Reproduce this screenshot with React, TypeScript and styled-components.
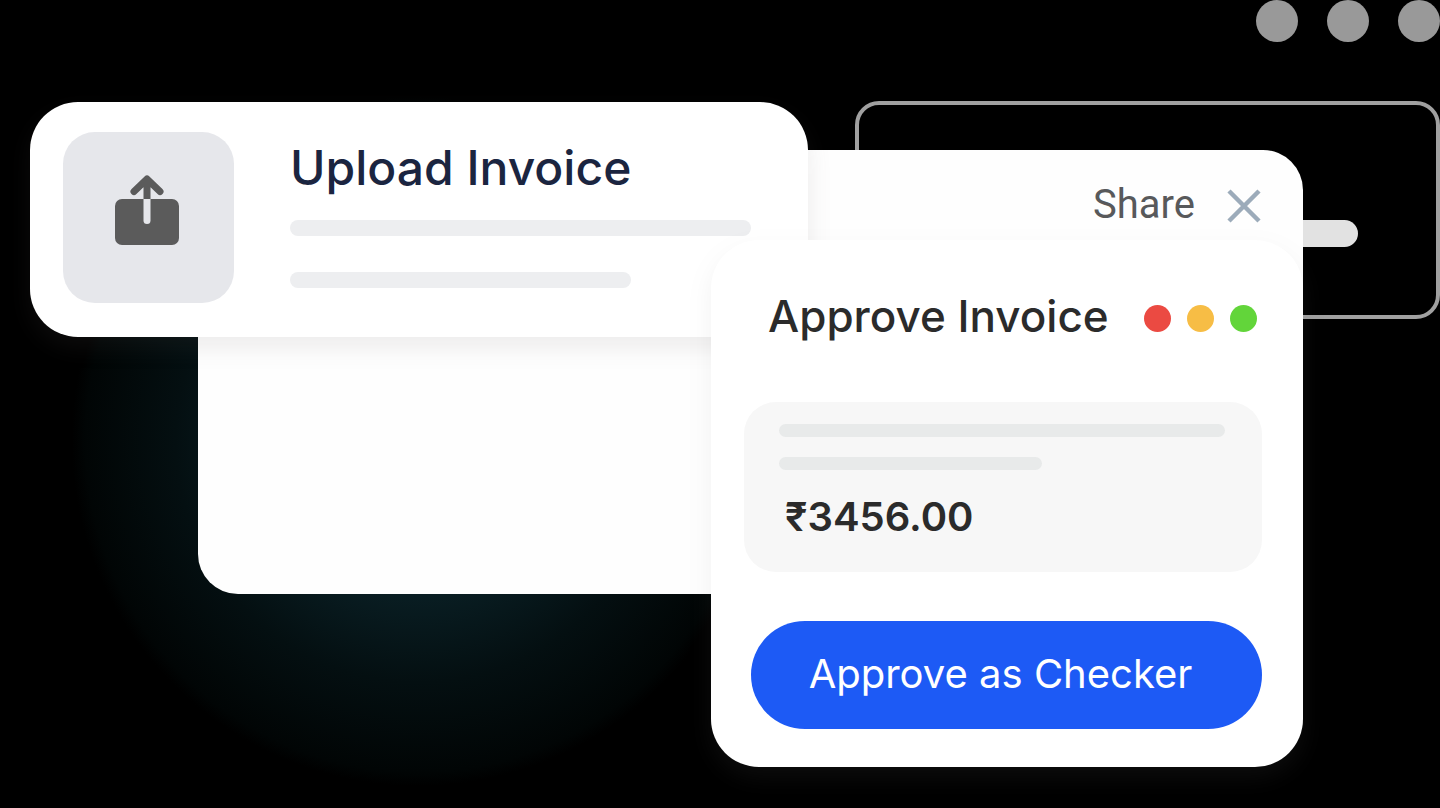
import React from "react";
import styled, { createGlobalStyle } from "styled-components";

const GlobalStyle = createGlobalStyle`
  *, *::before, *::after { box-sizing: border-box; }
  body { margin: 0; background: #000; font-family: Inter, "Liberation Sans", sans-serif; }
  h2, p { margin: 0; }
  button { border: 0; padding: 0; background: none; font: inherit; cursor: pointer; }
`;

const Stage = styled.main`
  display: grid;
  min-height: 100vh;
  grid-template-columns: 30fr 168fr 513fr 97fr 47fr 448fr 137fr;
  grid-template-rows: 101px 49px 90px 79px 18px 257px 173px 1fr;
  background: radial-gradient(
    circle 346px at 29% 440px,
    #0c2830 0%,
    #091d22 45%,
    #040f11 70%,
    #010505 96%,
    #000 100%
  );
`;

const WindowDots = styled.div`
  grid-area: 1 / 6 / 2 / 8;
  display: flex;
  justify-content: flex-end;
  gap: 29px;
`;

const Dot = styled.span<{ $size: number; $color: string }>`
  width: ${(p) => p.$size}px;
  height: ${(p) => p.$size}px;
  border-radius: 50%;
  background: ${(p) => p.$color};
`;

const OutlinePanel = styled.div`
  grid-area: 2 / 6 / 5 / 8;
  display: flex;
  justify-content: flex-end;
  align-items: flex-start;
  padding: 115px 78px 0 0;
  border: 4px solid #a0a0a0;
  border-radius: 24px;
`;

const Bar = styled.span<{ $width: string; $height: number; $color: string }>`
  display: block;
  width: ${(p) => p.$width};
  height: ${(p) => p.$height}px;
  border-radius: ${(p) => p.$height}px;
  background: ${(p) => p.$color};
`;

const ShareCard = styled.section`
  grid-area: 3 / 3 / 7 / 7;
  display: flex;
  justify-content: flex-end;
  align-items: flex-start;
  gap: 32px;
  padding: 32px 42px 0 0;
  border-radius: 40px;
  background: #fefefe;
`;

const ShareButton = styled.button`
  color: #58595b;
  font: 400 40px/46px Roboto, sans-serif;
`;

const CloseButton = styled.button`
  display: flex;
  height: 48px;
  align-items: center;
`;

const UploadCard = styled.section`
  grid-area: 2 / 2 / 6 / 5;
  display: flex;
  align-items: flex-start;
  gap: 56px;
  margin-top: 1px;
  padding: 30px 57px 0 33px;
  border-radius: 48px;
  background: #fff;
  box-shadow: 0 10px 24px rgba(110, 100, 100, 0.12);
`;

const UploadTile = styled.button`
  display: flex;
  flex: none;
  justify-content: center;
  width: 171px;
  height: 171px;
  padding: 42px 4px 0 0;
  border-radius: 32px;
  background: #e6e7eb;
`;

const UploadText = styled.div`
  display: flex;
  flex: 1;
  flex-direction: column;
  gap: 36px;
  padding-top: 6px;
`;

const Title = styled.h2<{ $size: number; $color: string }>`
  color: ${(p) => p.$color};
  font-size: ${(p) => p.$size}px;
  font-weight: 500;
  line-height: 60px;
  white-space: nowrap;
`;

const UploadTitle = styled(Title)`
  margin-bottom: -14px;
`;

const ApproveCard = styled.section`
  grid-area: 4 / 4 / 8 / 7;
  display: flex;
  flex-direction: column;
  padding: 46px 41px 38px 33px;
  border-radius: 48px;
  background: #fff;
  box-shadow: 0 10px 24px rgba(128, 128, 128, 0.1);
`;

const ApproveHeader = styled.header`
  display: flex;
  justify-content: space-between;
  align-items: center;
  padding: 0 5px 0 24px;
`;

const StatusDots = styled.div`
  display: flex;
  gap: 16px;
  padding-top: 4px;
`;

const Details = styled.div`
  display: flex;
  flex-direction: column;
  gap: 20px;
  height: 170px;
  margin-top: 56px;
  padding: 22px 37px 0 35px;
  border-radius: 32px;
  background: #f7f7f7;
`;

const Amount = styled.p`
  padding: 3px 0 0 6px;
  color: #2b2b2b;
  font-size: 40px;
  font-weight: 600;
  line-height: 48px;
`;

const ApproveButton = styled.button`
  height: 108px;
  margin: 49px 0 0 7px;
  padding: 0 12px 3px 0;
  border-radius: 54px;
  background: #1d5af5;
  color: #fff;
  font-size: 40px;
  white-space: nowrap;
`;

function UploadIcon() {
  return (
    <svg width="66" height="72" viewBox="0 0 66 72" fill="none" aria-hidden="true">
      <rect x="1" y="25" width="64" height="46" rx="7" fill="#5b5b5b" />
      <path d="M33 5.500V26M20 17.500L33 5L46 17.500" stroke="#5b5b5b" strokeWidth="7" strokeLinecap="round" strokeLinejoin="round" />
      <path d="M29.500 25H36.500V46.500A3.500 3.500 0 0 1 29.500 46.500Z" fill="#e6e7eb" />
    </svg>
  );
}

function CloseIcon() {
  return (
    <svg width="34" height="34" viewBox="0 0 34 34" aria-hidden="true">
      <path d="M2 2L32 32M32 2L2 32" stroke="#9cabba" strokeWidth="4.500" />
    </svg>
  );
}

export default function App() {
  return (
    <>
      <GlobalStyle />
      <Stage>
        <WindowDots>
          <Dot $size={42} $color="#999" />
          <Dot $size={42} $color="#999" />
          <Dot $size={42} $color="#999" />
        </WindowDots>

        <OutlinePanel>
          <Bar $width="60%" $height={27} $color="#e2e2e2" />
        </OutlinePanel>

        <ShareCard>
          <ShareButton type="button">Share</ShareButton>
          <CloseButton type="button" aria-label="Close">
            <CloseIcon />
          </CloseButton>
        </ShareCard>

        <UploadCard>
          <UploadTile type="button" aria-label="Upload">
            <UploadIcon />
          </UploadTile>
          <UploadText>
            <UploadTitle $size={48} $color="#1b2540">Upload Invoice</UploadTitle>
            <Bar $width="100%" $height={16} $color="#edeef0" />
            <Bar $width="74%" $height={16} $color="#edeef0" />
          </UploadText>
        </UploadCard>

        <ApproveCard>
          <ApproveHeader>
            <Title $size={44} $color="#2b2b2b">Approve Invoice</Title>
            <StatusDots>
              <Dot $size={27} $color="#eb4a42" />
              <Dot $size={27} $color="#f7bd45" />
              <Dot $size={27} $color="#62d53a" />
            </StatusDots>
          </ApproveHeader>
          <Details>
            <Bar $width="100%" $height={13} $color="#e8eaea" />
            <Bar $width="59%" $height={13} $color="#e8eaea" />
            <Amount>₹3456.00</Amount>
          </Details>
          <ApproveButton type="button">Approve as Checker</ApproveButton>
        </ApproveCard>
      </Stage>
    </>
  );
}
